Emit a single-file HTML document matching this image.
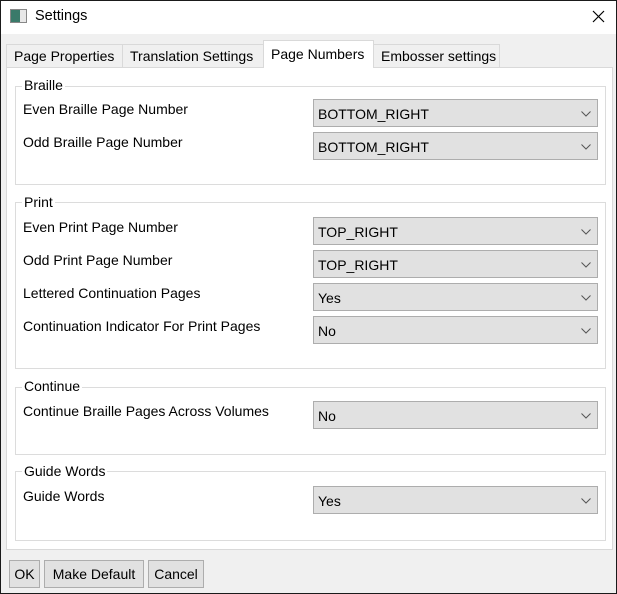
<!DOCTYPE html>
<html><head><meta charset="utf-8"><style>
*{box-sizing:border-box;margin:0;padding:0}
body{width:617px;height:594px;overflow:hidden;font-family:"Liberation Sans",sans-serif;font-size:14px;color:#000;background:#f0f0f0;position:relative}
.win{position:absolute;left:0;top:0;width:617px;height:594px;border:1px solid #1a1a1a;background:#f0f0f0}
.title{position:absolute;left:0;top:0;width:615px;height:33px;background:#fff}
.a{position:absolute;white-space:nowrap}
.tab{position:absolute;border:1px solid #d9d9d9;border-bottom:none;background:#f0f0f0;padding-left:7px;line-height:22px}
.panel{position:absolute;left:5px;top:66px;width:607px;height:483px;background:#fff;border:1px solid #d9d9d9}
.grp{position:absolute;left:14px;width:591px;border:1px solid #dcdcdc}
.gt{position:absolute;background:#fff;padding:0 2px;line-height:16px}
.cb{position:absolute;left:312px;width:285px;height:28px;background:#e1e1e1;border:1px solid #adadad;padding-left:4px;line-height:28px}
.cb svg{position:absolute;right:6px;top:11px}
.btn{position:absolute;top:559px;height:28px;background:#e1e1e1;border:1px solid #adadad;text-align:center;line-height:27px}
</style></head><body><div class="win">
<div class="title"></div>
<div class="a" style="left:9px;top:8px;width:17px;height:14px;border:1px solid #888;background:linear-gradient(90deg,#3a7a6a 0,#3a7a6a 60%,#e8e8e8 60%)"></div>
<div class="a" style="left:34px;top:7px;font-size:14.5px">Settings</div>
<svg class="a" style="left:591px;top:9px" width="13" height="13"><path d="M1 1L12 12M12 1L1 12" stroke="#000" stroke-width="1.2"/></svg>
<div class="tab" style="left:5px;top:43px;width:117px;height:24px">Page Properties</div>
<div class="tab" style="left:121px;top:43px;width:142px;height:24px">Translation Settings</div>
<div class="tab" style="left:372px;top:43px;width:127px;height:24px">Embosser settings</div>
<div class="panel"></div>
<div class="tab" style="left:262px;top:39px;width:111px;height:28px;background:#fff;line-height:26px">Page Numbers</div>

<div class="grp" style="top:85px;height:99px"></div><div class="gt a" style="left:21px;top:76px">Braille</div>
<div class="a" style="left:22px;top:100px">Even Braille Page Number</div>
<div class="a" style="left:22px;top:133px">Odd Braille Page Number</div>
<div class="cb" style="top:98px">BOTTOM_RIGHT<svg width="10" height="6"><path d="M0.5 0.5L5 5L9.5 0.5" fill="none" stroke="#555"/></svg></div>
<div class="cb" style="top:131px">BOTTOM_RIGHT<svg width="10" height="6"><path d="M0.5 0.5L5 5L9.5 0.5" fill="none" stroke="#555"/></svg></div>

<div class="grp" style="top:201px;height:167px"></div><div class="gt a" style="left:21px;top:193px">Print</div>
<div class="a" style="left:22px;top:218px">Even Print Page Number</div>
<div class="a" style="left:22px;top:251px">Odd Print Page Number</div>
<div class="a" style="left:22px;top:284px">Lettered Continuation Pages</div>
<div class="a" style="left:22px;top:317px">Continuation Indicator For Print Pages</div>
<div class="cb" style="top:216px">TOP_RIGHT<svg width="10" height="6"><path d="M0.5 0.5L5 5L9.5 0.5" fill="none" stroke="#555"/></svg></div>
<div class="cb" style="top:249px">TOP_RIGHT<svg width="10" height="6"><path d="M0.5 0.5L5 5L9.5 0.5" fill="none" stroke="#555"/></svg></div>
<div class="cb" style="top:282px">Yes<svg width="10" height="6"><path d="M0.5 0.5L5 5L9.5 0.5" fill="none" stroke="#555"/></svg></div>
<div class="cb" style="top:315px">No<svg width="10" height="6"><path d="M0.5 0.5L5 5L9.5 0.5" fill="none" stroke="#555"/></svg></div>

<div class="grp" style="top:386px;height:68px"></div><div class="gt a" style="left:21px;top:377px">Continue</div>
<div class="a" style="left:22px;top:402px">Continue Braille Pages Across Volumes</div>
<div class="cb" style="top:400px">No<svg width="10" height="6"><path d="M0.5 0.5L5 5L9.5 0.5" fill="none" stroke="#555"/></svg></div>

<div class="grp" style="top:470px;height:70px"></div><div class="gt a" style="left:21px;top:462px">Guide Words</div>
<div class="a" style="left:22px;top:487px">Guide Words</div>
<div class="cb" style="top:485px">Yes<svg width="10" height="6"><path d="M0.5 0.5L5 5L9.5 0.5" fill="none" stroke="#555"/></svg></div>

<div class="btn" style="left:8px;width:31px">OK</div>
<div class="btn" style="left:43px;width:100px">Make Default</div>
<div class="btn" style="left:147px;width:56px">Cancel</div>
</div></body></html>
